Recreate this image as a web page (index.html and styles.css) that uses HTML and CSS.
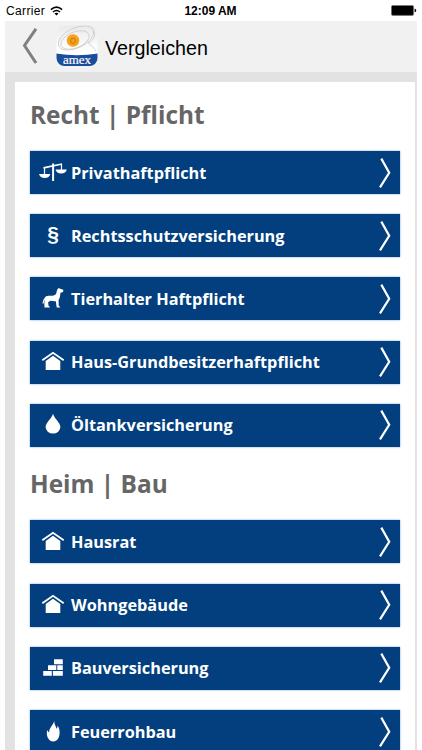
FILE: index.html
```
<!DOCTYPE html>
<html lang="de">
    <head>
        <meta charset="utf-8" />
        <meta name="viewport" content="width=device-width, initial-scale=1" />
        <title>Vergleichen</title>
        <link rel="stylesheet" href="styles.css" />
    </head>

    <body>
        <!-- shared icons -->
        <svg class="sprite" aria-hidden="true">
            <symbol id="scales" viewBox="0 0 30 24">
                <path d="M5.500 7.800L24 4" fill="none" stroke="currentColor" stroke-width="1.700" />
                <path d="M14.100 3.500h2V21h-2zM1 14h11.300q-1 4-5.600 4T1 14zM17.500 9.500h11.300q-1 4-5.600 4t-5.700-4z" />
                <path d="M6.500 7.500v7M23.500 4v6" fill="none" stroke="currentColor" stroke-width="1.200" />
            </symbol>
            <symbol id="dog" viewBox="0 0 30 24">
                <path d="M4.600 17.800c0-1.700.5-3.900 1.800-5.600 1.100-1.600 2.300-2.400 4-2.400 3 .2 5-.1 6.800-1.100 1.500-1.300 1.400-3.800 2.100-5.300l1.300-1.500 1.500.9 3.200.9-.2 2.400-2.700.7c-.1 2.900-.6 5.400-1.800 7.300l.1 5.700 1.300.9v.7h-3.300l-.9-6.200c-2 .2-3.800-.2-5.400-.5l-2.300 1.500.5 3.800 1.200.8v.6H6.500l-.2-4.500.6-3.500c-.7 1.100-.9 2.900-1.500 4.400z" />
            </symbol>
            <symbol id="house" viewBox="0 0 30 24">
                <path d="M4.300 11.200L15 3.800l10.700 7.400" fill="none" stroke="currentColor" stroke-width="1.900" />
                <path d="M15 6.800l7.300 5.100V21H7.700v-9.100z" />
            </symbol>
            <symbol id="drop" viewBox="0 0 30 24">
                <path d="M15 1.800c1.300 4.800 7.400 8.800 7.400 13.300a7.400 6.500 0 0 1-14.800 0C7.600 10.600 13.700 6.600 15 1.800z" />
            </symbol>
            <symbol id="bricks" viewBox="0 0 30 24">
                <path d="M16 4.200h8.800v5H16zM10 10.200h8.300v4.700H10zM19.300 10.200h5.500v4.700h-5.500zM5.200 16h8.600v4.800H5.200zM14.900 16h9.900v4.800h-9.900z" />
            </symbol>
            <symbol id="flame" viewBox="0 0 30 24">
                <path d="M16.200 1.800c-.2 3.200 1.600 5 2.400 8 .8-1 1-2 1-3.200 2.500 3.700 2.600 8.900 1 12.200-1 2.300-3 3.700-5.700 3.800-3.200-.5-5.300-3.200-6-6.700-.2-1.500-.1-3.200.3-4.800.6 1.100 1.100 1.900 2 2.500C11 8.700 15.200 6.500 16.200 1.800z" />
            </symbol>
            <symbol id="arrow" viewBox="0 0 14 30">
                <path d="M3.300.6l7.900 14.200L2 29.400" fill="none" stroke="currentColor" stroke-width="2.200" />
            </symbol>
        </svg>

        <div class="statusbar">
            <div class="carrier">
                Carrier
                <svg width="13" height="10" viewBox="0 0 13 10">
                    <g fill="none" stroke="#000" stroke-width="1.500">
                        <path d="M.9 3.600q5.600-4.900 11.200 0M3 6q3.500-3 7 0" />
                    </g>
                    <path d="M6.500 9.600L4.500 7.600q2-1.500 4 0z" />
                </svg>
            </div>
            <div class="time">12:09 AM</div>
            <svg class="battery" width="26" height="11" viewBox="0 0 26 11">
                <rect x=".4" y=".4" width="22.200" height="10" rx="1.500" stroke="#777" stroke-width=".8" />
                <path d="M23.600 3.600q1.600.4 1.600 1.900t-1.600 1.900z" />
            </svg>
        </div>

        <div class="app">
            <header class="header">
                <svg class="back" width="16" height="36" viewBox="0 0 16 36">
                    <path d="M14 .8L2.500 17.500 14 35" fill="none" stroke="#808080" stroke-width="3" />
                </svg>
                <svg class="logo" width="42" height="42" viewBox="0 0 42 42">
                    <defs>
                        <clipPath id="logo-shape"><rect x=".5" y=".5" width="41" height="40.500" rx="8" /></clipPath>
                        <linearGradient id="logo-bg" x2="0" y2="1">
                            <stop offset="0" stop-color="#e9e9e9" />
                            <stop offset=".6" stop-color="#fff" />
                        </linearGradient>
                    </defs>
                    <g clip-path="url(#logo-shape)">
                        <rect width="42" height="42" fill="url(#logo-bg)" />
                        <g fill="none" stroke="#c6c6c6" stroke-width=".7">
                            <ellipse cx="20" cy="13" rx="19" ry="10" transform="rotate(-25 20 13)" />
                            <ellipse cx="19" cy="15" rx="15" ry="8" transform="rotate(-22 19 15)" />
                            <path d="M38 6c2 6-1 10-6 12q5 3 8 8" />
                        </g>
                        <path d="M0 28.500q21 3.500 42 0V42H0z" fill="#1c4c9c" />
                    </g>
                    <circle cx="17" cy="15.500" r="6.200" fill="#f6a117" />
                    <path d="M14.800 17.500v-3l1-1.500 1 1 1.200-1 1.200 1.500v3l-2 1z" fill="none" stroke="#a66d12" stroke-width=".7" />
                    <text x="21" y="38.500" text-anchor="middle" textLength="28" lengthAdjust="spacingAndGlyphs">amex</text>
                </svg>
                <h1>Vergleichen</h1>
            </header>

            <main class="content">
                <h2>Recht | Pflicht</h2>
                <nav class="list">
                    <a class="item"><svg class="icon"><use href="#scales" /></svg><span>Privathaftpflicht</span><svg class="arrow"><use href="#arrow" /></svg></a>
                    <a class="item"><b class="icon paragraph">§</b><span>Rechtsschutzversicherung</span><svg class="arrow"><use href="#arrow" /></svg></a>
                    <a class="item"><svg class="icon"><use href="#dog" /></svg><span>Tierhalter Haftpflicht</span><svg class="arrow"><use href="#arrow" /></svg></a>
                    <a class="item"><svg class="icon"><use href="#house" /></svg><span>Haus-Grundbesitzerhaftpflicht</span><svg class="arrow"><use href="#arrow" /></svg></a>
                    <a class="item"><svg class="icon"><use href="#drop" /></svg><span>Öltankversicherung</span><svg class="arrow"><use href="#arrow" /></svg></a>
                </nav>

                <h2>Heim | Bau</h2>
                <nav class="list">
                    <a class="item"><svg class="icon"><use href="#house" /></svg><span>Hausrat</span><svg class="arrow"><use href="#arrow" /></svg></a>
                    <a class="item"><svg class="icon"><use href="#house" /></svg><span>Wohngebäude</span><svg class="arrow"><use href="#arrow" /></svg></a>
                    <a class="item"><svg class="icon"><use href="#bricks" /></svg><span>Bauversicherung</span><svg class="arrow"><use href="#arrow" /></svg></a>
                    <a class="item"><svg class="icon"><use href="#flame" /></svg><span>Feuerrohbau</span><svg class="arrow"><use href="#arrow" /></svg></a>
                </nav>
            </main>
        </div>
    </body>
</html>
```
FILE: styles.css
```
* {
    box-sizing: border-box;
}

body {
    margin: 0;
    height: 100vh;
    overflow: hidden;
    background: #fff;
    font-family: "Open Sans", sans-serif;
}

.sprite {
    display: none;
}

.statusbar {
    display: grid;
    grid-template-columns: 1fr auto 1fr;
    align-items: center;
    height: 21px;
    padding: 1px 5px 0 6px;
    font: 12px/20px "Liberation Sans", Arial, sans-serif;
    color: #000;
}

.carrier {
    display: flex;
    align-items: center;
    gap: 5px;
    letter-spacing: 0.35px;
}

.time {
    font-weight: bold;
    font-size: 12px;
    margin-right: 2px;
}

.battery {
    justify-self: end;
    margin-bottom: 2px;
}

.app {
    margin: 0 5px;
    width: 412px;
    background: #e2e2e2;
}

.header {
    display: flex;
    align-items: center;
    height: 51px;
    padding-left: 17px;
    background: #f1f1f1;
}

.back {
    margin-top: -1px;
}

.logo {
    margin: -2px 0 0 18px;
}

.logo text {
    font: 13.5px "Liberation Serif", serif;
    fill: #fff;
    stroke: #fff;
    stroke-width: 0.2px;
}

h1 {
    margin: 2px 0 0 7px;
    font: 19.7px/24px "Liberation Sans", Arial, sans-serif;
    color: #000;
}

.content {
    border-top: 10px solid #e2e2e2;
    border-left: 10px solid #e2e2e2;
    border-right: 2px solid #e2e2e2;
    padding: 16px 15px 0;
    background: #fff;
}

h2 {
    margin: 0;
    padding-bottom: 19px;
    font-size: 24.4px;
    line-height: 34px;
    font-weight: bold;
    color: #666;
}

.list {
    display: flex;
    flex-direction: column;
    gap: 20.2px;
    padding-bottom: 20.7px;
}

.item {
    display: flex;
    align-items: center;
    height: 43px;
    padding: 0 8px;
    background: #033f7e;
    box-shadow: 0 0 2px #7da4cf;
    color: #fff;
    font-size: 16.3px;
    font-weight: bold;
}

.icon {
    width: 30px;
    height: 24px;
    margin: 0 3px 2px 0;
    fill: currentColor;
}

.paragraph {
    font: bold 21px/22px "Liberation Sans", Arial, sans-serif;
    text-align: center;
}

.arrow {
    width: 14px;
    height: 30px;
    margin-left: auto;
}
```
